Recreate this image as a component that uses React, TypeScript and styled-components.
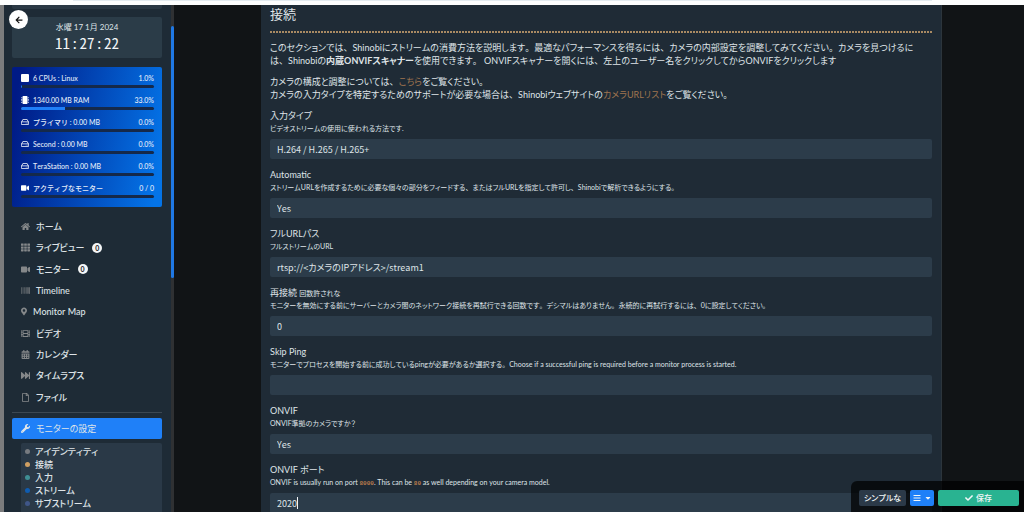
import React from "react";
import styled, { createGlobalStyle } from "styled-components";
import {
  FaArrowLeft,
  FaBarcode,
  FaBars,
  FaCalendarAlt,
  FaCaretDown,
  FaCheck,
  FaFastForward,
  FaFilm,
  FaHome,
  FaMapMarkerAlt,
  FaMicrochip,
  FaRegFile,
  FaRegHdd,
  FaTh,
  FaVideo,
  FaWrench,
} from "react-icons/fa";

const colors = {
  sidebar: "#1e2b36",
  panel: "#1f2b36",
  field: "#2c3c4a",
  text: "#dfe4e8",
  muted: "#85888a",
  accent: "#1f80f8",
  link: "#a0754f",
};

const GlobalStyle = createGlobalStyle`
  *, *::before, *::after { box-sizing: border-box; }
  body {
    margin: 0;
    background: #111416;
    color: ${colors.text};
    font: 9px/13px Lato, "Noto Sans CJK JP", sans-serif;
    font-feature-settings: "palt", "kern" 0;
    font-kerning: none;
  }
  button, input, select { font: inherit; font-feature-settings: inherit; color: inherit; }
  a { color: inherit; text-decoration: none; }
`;

const Page = styled.div`
  display: flex;
  flex-direction: column;
  height: 100vh;
  overflow: hidden;
`;

const BrowserEdge = styled.div`
  flex: none;
  height: 5px;
  padding: 0 92px 0 73px;
  background: #fdfefe;
  &::before {
    content: "";
    display: block;
    height: 1px;
    background: #e3ebf0;
  }
`;

const Body = styled.div`
  display: flex;
  flex: 1;
  min-height: 0;
  border-left: 4px solid #7b7c7d;
`;

const Sidebar = styled.aside`
  position: relative;
  flex: none;
  width: 167px;
  padding: 0 9px 0 8px;
  background: ${colors.sidebar};
  overflow: hidden;
`;

const ScrollTrack = styled.div`
  flex: none;
  width: 3px;
  padding-top: 21px;
  background: #2f3133;
`;

const ScrollThumb = styled.div`
  height: 252px;
  border-radius: 2px;
  background: #1f78e4;
`;

const BackButton = styled.button`
  position: absolute;
  top: 5px;
  left: 5px;
  display: grid;
  place-items: center;
  width: 19px;
  height: 19px;
  padding: 0;
  border: 0;
  border-radius: 50%;
  background: #fff;
  color: #111;
  svg { font-size: 8px; }
`;

const ClippedCard = styled.div`
  height: 4px;
  border-radius: 0 0 2px 2px;
  background: #2a3844;
`;

const ClockCard = styled.section`
  margin-top: 8px;
  padding: 4px 0 6px;
  border-radius: 2px;
  background: #2b3c48;
  text-align: center;
`;

const ClockDate = styled.div`
  font-size: 8px;
  line-height: 13px;
`;

const ClockTime = styled.div`
  display: flex;
  justify-content: center;
  gap: 1px;
  font: 15px/18px "Noto Sans CJK JP", sans-serif;
  font-feature-settings: "hwid";
  color: #f4f6f8;
`;

const Stats = styled.section`
  display: flex;
  flex-direction: column;
  gap: 5px;
  margin-top: 9px;
  padding: 4px 8px 9px 9px;
  border-radius: 2px;
  background: linear-gradient(100deg, #001a85 5%, #0474e8 95%);
  font-size: 7px;
  font-weight: 500;
  font-feature-settings: normal;
`;

const StatHead = styled.div`
  display: flex;
  align-items: center;
  gap: 4px;
  height: 14px;
  color: #e4ecf8;
  svg { font-size: 8px; color: #fff; }
  span:last-child { margin-left: auto; }
`;

const CpuIcon = styled.i`
  width: 8px;
  height: 8px;
  border-radius: 1px;
  background: #fff;
`;

const Track = styled.div`
  height: 3px;
  border-radius: 2px;
  background: #15294a;
  overflow: hidden;
`;

const TrackFill = styled.div`
  height: 100%;
  background: #1f7ff8;
`;

const Nav = styled.nav`
  display: grid;
  grid-auto-rows: 1fr;
  height: 192px;
  margin-top: 9px;
  padding-left: 9px;
`;

const NavLink = styled.a`
  display: flex;
  align-items: center;
  gap: 6px;
  font-weight: 500;
  svg { font-size: 9px; color: ${colors.muted}; }
`;

const MarkerIcon = styled(FaMapMarkerAlt)`
  width: 6px;
`;

const Badge = styled.span`
  display: grid;
  place-items: center;
  width: 10px;
  height: 10px;
  margin-left: 2px;
  border-radius: 50%;
  background: #f4f6f7;
  color: #222;
  font-size: 7px;
  line-height: 10px;
  font-weight: 700;
`;

const Divider = styled.hr`
  height: 1px;
  margin: 4px 0 5px;
  border: 0;
  background: #3c4852;
`;

const ActiveLink = styled.a`
  display: flex;
  align-items: center;
  gap: 6px;
  height: 21px;
  padding-left: 9px;
  border-radius: 2px;
  background: ${colors.accent};
`;

const SubMenu = styled.div`
  margin: 4px 0 0 9px;
  padding: 2px 4px 4px;
  border-radius: 2px;
  background: #2a3947;
`;

const SubLink = styled.a<{ $dot: string }>`
  display: flex;
  align-items: center;
  gap: 5px;
  height: 13px;
  font-weight: 500;
  &::before {
    content: "";
    width: 5px;
    height: 5px;
    border-radius: 50%;
    background: ${(p) => p.$dot};
  }
`;

const Main = styled.main`
  flex: 1;
  min-width: 0;
  padding: 0 82px 0 87px;
  overflow: hidden;
`;

const Panel = styled.section`
  min-height: 100%;
  padding: 0 9px;
  border-right: 1px solid #2c353c;
  background: ${colors.panel};
`;

const Title = styled.h1`
  margin: 0;
  padding-bottom: 7px;
  font-size: 13px;
  line-height: 19px;
  font-weight: 400;
`;

const DottedRule = styled.div`
  height: 2px;
  margin-bottom: 8px;
  background: repeating-linear-gradient(90deg, #a98a63 0 2px, transparent 2px 3px);
`;

const Paragraph = styled.p`
  margin: 0 0 8px;
  a { color: ${colors.link}; }
`;

/* Full-width comma or full stop inside proportionally set kana. */
const Mark = styled.span`
  font-feature-settings: normal;
`;

const Field = styled.div`
  position: relative;
  margin-bottom: 9px;
`;

const FieldLabel = styled.label`
  display: block;
  height: 13px;
  small { font-size: 7px; line-height: 9px; }
`;

const Hint = styled.div`
  height: 13px;
  margin-bottom: 4px;
  font-size: 7px;
  white-space: nowrap;
  code {
    color: #b87a4c;
    font: 700 6px/9px "Liberation Mono", monospace;
  }
`;

const fieldBox = `
  display: block;
  width: 100%;
  height: 20px;
  padding: 0 7px;
  border: 0;
  border-radius: 2px;
  outline: 0;
  background: ${colors.field};
  font-family: "Noto Sans CJK JP", sans-serif;
  appearance: none;
`;

const TextInput = styled.input`${fieldBox}`;
const SelectInput = styled.select`${fieldBox}`;

const Caret = styled.span`
  position: absolute;
  bottom: 4px;
  left: 27px;
  width: 1px;
  height: 12px;
  background: #f2f4f6;
`;

const Toolbar = styled.div`
  position: fixed;
  right: 0;
  bottom: 0;
  display: flex;
  gap: 4px;
  padding: 9px 5px 6px 8px;
  border-radius: 6px 0 0 0;
  background: rgba(0, 0, 0, 0.72);
`;

const ToolButton = styled.button<{ $bg: string; $width: number }>`
  display: flex;
  align-items: center;
  justify-content: center;
  gap: 3px;
  width: ${(p) => p.$width}px;
  height: 16px;
  padding: 0;
  border: 0;
  border-radius: 2px;
  background: ${(p) => p.$bg};
  color: #f2f6f8;
  font-size: 8px;
  font-weight: 500;
`;

const stats = [
  { icon: <CpuIcon />, name: "6 CPUs : Linux", value: "1.0%", percent: 1 },
  { icon: <FaMicrochip />, name: "1340.00 MB RAM", value: "33.0%", percent: 33 },
  { icon: <FaRegHdd />, name: "プライマリ : 0.00 MB", value: "0.0%", percent: 0 },
  { icon: <FaRegHdd />, name: "Second : 0.00 MB", value: "0.0%", percent: 0 },
  { icon: <FaRegHdd />, name: "TeraStation : 0.00 MB", value: "0.0%", percent: 0 },
  { icon: <FaVideo />, name: "アクティブなモニター", value: "0 / 0", percent: 0 },
];

const navItems = [
  { icon: <FaHome />, name: "ホーム" },
  { icon: <FaTh />, name: "ライブビュー", count: 0 },
  { icon: <FaVideo />, name: "モニター", count: 0 },
  { icon: <FaBarcode />, name: "Timeline" },
  { icon: <MarkerIcon />, name: "Monitor Map" },
  { icon: <FaFilm />, name: "ビデオ" },
  { icon: <FaCalendarAlt />, name: "カレンダー" },
  { icon: <FaFastForward />, name: "タイムラプス" },
  { icon: <FaRegFile />, name: "ファイル" },
];

const sections = [
  { name: "アイデンティティ", dot: "#777b80" },
  { name: "接続", dot: "#cf9f62" },
  { name: "入力", dot: "#3f8f94" },
  { name: "ストリーム", dot: "#0f5cb0" },
  { name: "サブストリーム", dot: "#3f5688" },
];

type FieldSpec = {
  id: string;
  label: React.ReactNode;
  hint: React.ReactNode;
  value: string;
  kind: "select" | "text";
  caret?: boolean;
};

const Ja = ({ children }: { children: string }) => (
  <>
    {children.split(/([、。])/).map((part, i) => (i % 2 ? <Mark key={i}>{part}</Mark> : part))}
  </>
);

const fields: FieldSpec[] = [
  { id: "type", label: "入力タイプ", hint: "ビデオストリームの使用に使われる方法です.", value: "H.264 / H.265 / H.265+", kind: "select" },
  {
    id: "automatic",
    label: "Automatic",
    hint: <Ja>ストリームURLを作成するために必要な個々の部分をフィードする、またはフルURLを指定して許可し、Shinobiで解析できるようにする。</Ja>,
    value: "Yes",
    kind: "select",
  },
  { id: "url", label: "フルURLパス", hint: "フルストリームのURL", value: "rtsp://<カメラのIPアドレス>/stream1", kind: "text" },
  {
    id: "retry",
    label: <>再接続 <small>回数許されな</small></>,
    hint: <Ja>モニターを無効にする前にサーバーとカメラ間のネットワーク接続を再試行できる回数です。デシマルはありません。永続的に再試行するには、0に設定してください。</Ja>,
    value: "0",
    kind: "text",
  },
  {
    id: "ping",
    label: "Skip Ping",
    hint: <Ja>モニターでプロセスを開始する前に成功しているpingが必要があるか選択する。Choose if a successful ping is required before a monitor process is started.</Ja>,
    value: "",
    kind: "select",
  },
  { id: "onvif", label: "ONVIF", hint: "ONVIF準拠のカメラですか？", value: "Yes", kind: "select" },
  {
    id: "port",
    label: "ONVIF ポート",
    hint: <>ONVIF is usually run on port <code>8000</code>. This can be <code>80</code> as well depending on your camera model.</>,
    value: "2020",
    kind: "text",
    caret: true,
  },
];

export default function App() {
  return (
    <Page lang="ja">
      <GlobalStyle />
      <BrowserEdge />
      <Body>
        <Sidebar>
          <ClippedCard />
          <ClockCard>
            <ClockDate>水曜 17 1月 2024</ClockDate>
            <ClockTime>
              <span>11</span>
              <span>:</span>
              <span>27</span>
              <span>:</span>
              <span>22</span>
            </ClockTime>
          </ClockCard>
          <Stats>
            {stats.map((s) => (
              <div key={s.name}>
                <StatHead>
                  {s.icon}
                  <span>{s.name}</span>
                  <span>{s.value}</span>
                </StatHead>
                <Track>
                  <TrackFill style={{ width: `${s.percent}%` }} />
                </Track>
              </div>
            ))}
          </Stats>
          <Nav>
            {navItems.map((n) => (
              <NavLink href="#" key={n.name}>
                {n.icon}
                {n.name}
                {n.count !== undefined && <Badge>{n.count}</Badge>}
              </NavLink>
            ))}
          </Nav>
          <Divider />
          <ActiveLink href="#">
            <FaWrench />
            モニターの設定
          </ActiveLink>
          <SubMenu>
            {sections.map((s) => (
              <SubLink href="#" key={s.name} $dot={s.dot}>
                {s.name}
              </SubLink>
            ))}
          </SubMenu>
          <BackButton aria-label="戻る">
            <FaArrowLeft />
          </BackButton>
        </Sidebar>
        <ScrollTrack>
          <ScrollThumb />
        </ScrollTrack>
        <Main>
          <Panel>
            <Title>接続</Title>
            <DottedRule />
            <Paragraph>
              <Ja>このセクションでは、Shinobiにストリームの消費方法を説明します。最適なパフォーマンスを得るには、カメラの内部設定を調整してみてください。カメラを見つけるに</Ja>
              <br />
              <Ja>は、Shinobiの</Ja>
              <b>内蔵ONVIFスキャナー</b>
              <Ja>を使用できます。 ONVIFスキャナーを開くには、左上のユーザー名をクリックしてからONVIFをクリックします</Ja>
            </Paragraph>
            <Paragraph>
              <Ja>カメラの構成と調整については、</Ja>
              <a href="#">こちら</a>
              <Ja>をご覧ください。</Ja>
              <br />
              <Ja>カメラの入力タイプを特定するためのサポートが必要な場合は、Shinobiウェブサイトの</Ja>
              <a href="#">カメラURLリスト</a>
              <Ja>をご覧ください。</Ja>
            </Paragraph>
            {fields.map((f) => (
              <Field key={f.id}>
                <FieldLabel htmlFor={f.id}>{f.label}</FieldLabel>
                <Hint>{f.hint}</Hint>
                {f.kind === "select" ? (
                  <SelectInput id={f.id} defaultValue={f.value}>
                    <option>{f.value}</option>
                  </SelectInput>
                ) : (
                  <TextInput id={f.id} type="text" defaultValue={f.value} />
                )}
                {f.caret && <Caret />}
              </Field>
            ))}
          </Panel>
        </Main>
      </Body>
      <Toolbar>
        <ToolButton $bg="#2b3948" $width={47}>シンプルな</ToolButton>
        <ToolButton $bg={colors.accent} $width={24} aria-label="メニュー">
          <FaBars size={8} />
          <FaCaretDown size={8} />
        </ToolButton>
        <ToolButton $bg="#29b391" $width={81}>
          <FaCheck size={8} />
          保存
        </ToolButton>
      </Toolbar>
    </Page>
  );
}
